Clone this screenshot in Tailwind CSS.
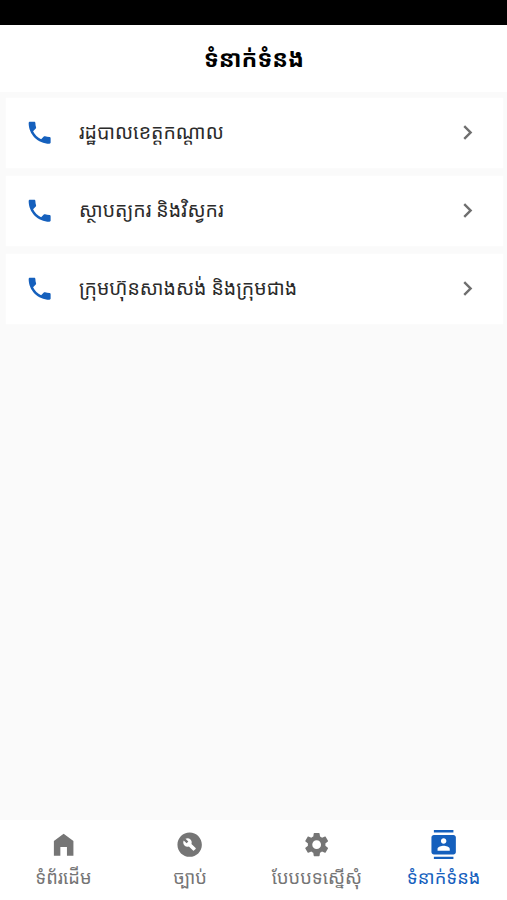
<!DOCTYPE html>
<html lang="km">
<head>
<meta charset="utf-8">
<title>ទំនាក់ទំនង</title>
<script src="https://cdn.jsdelivr.net/npm/@tailwindcss/browser@4"></script>
</head>
<body class="w-[507px] h-[900px] overflow-hidden flex flex-col bg-[#fafafa] font-['Noto_Sans_Khmer','Noto_Sans','DejaVu_Sans',sans-serif]">
<svg class="hidden">
<symbol id="call" viewBox="0 0 24 24"><path d="M6.62 10.79c1.44 2.83 3.76 5.14 6.59 6.59l2.2-2.2c.27-.27.67-.36 1.02-.24 1.12.37 2.33.57 3.57.57.55 0 1 .45 1 1V20c0 .55-.45 1-1 1-9.39 0-17-7.61-17-17 0-.55.45-1 1-1h3.5c.55 0 1 .45 1 1 0 1.25.2 2.45.57 3.57.11.35.03.74-.25 1.02l-2.2 2.2z"/></symbol>
<symbol id="chev" viewBox="0 0 24 24"><path d="M10 6 8.59 7.41 13.17 12l-4.58 4.59L10 18l6-6z"/></symbol>
</svg>
<div class="h-[25px] shrink-0 bg-black"></div>
<header class="h-[67px] shrink-0 bg-white flex items-center justify-center">
<h1 class="pb-[2px] pl-px text-[23.3px] leading-[30px] font-bold text-black whitespace-nowrap">ទំនាក់ទំនង</h1>
</header>
<main class="flex-1 pt-[6px] pl-[6px] pr-[4px] flex flex-col gap-[8px]">
<div class="h-[70px] bg-white flex items-center pl-[19px] pr-[21px] shadow-[0_0_2px_#ffffff]"><svg class="size-[29.3px] fill-[#1560bd]"><use href="#call"/></svg><span class="ml-[24.7px] pb-[2px] flex-1 text-[19.5px] leading-[30px] text-[#2b2b2b] whitespace-nowrap">រដ្ឋបាលខេត្តកណ្តាល</span><svg class="size-[29px] mb-px fill-[#6f6f6f]"><use href="#chev"/></svg></div>
<div class="h-[70px] bg-white flex items-center pl-[19px] pr-[21px] shadow-[0_0_2px_#ffffff]"><svg class="size-[29.3px] fill-[#1560bd]"><use href="#call"/></svg><span class="ml-[24.7px] pb-[2px] flex-1 text-[19.5px] leading-[30px] text-[#2b2b2b] whitespace-nowrap">ស្ថាបត្យករ និងវិស្វករ</span><svg class="size-[29px] mb-px fill-[#6f6f6f]"><use href="#chev"/></svg></div>
<div class="h-[70px] bg-white flex items-center pl-[19px] pr-[21px] shadow-[0_0_2px_#ffffff]"><svg class="size-[29.3px] fill-[#1560bd]"><use href="#call"/></svg><span class="ml-[24.7px] pb-[2px] flex-1 text-[19.5px] leading-[30px] text-[#2b2b2b] whitespace-nowrap">ក្រុមហ៊ុនសាងសង់ និងក្រុមជាង</span><svg class="size-[29px] mb-px fill-[#6f6f6f]"><use href="#chev"/></svg></div>
</main>
<nav class="h-[80px] shrink-0 bg-white grid grid-cols-4 pt-[10px] text-[18.3px] leading-[36px] text-[#757575] fill-[#757575]">
<div class="flex flex-col items-center"><svg class="size-[29.3px]" viewBox="0 0 24 24"><path d="M4 21V9l8-6 8 6v12h-5.3v-7H9.3v7z"/></svg><span class="whitespace-nowrap">ទំព័រដើម</span></div>
<div class="flex flex-col items-center"><svg class="size-[29.3px]" viewBox="0 0 24 24"><path d="M12 2C6.48 2 2 6.48 2 12s4.48 10 10 10 10-4.48 10-10S17.52 2 12 2zm4.9 13.49l-1.4 1.4c-.2.2-.51.2-.71 0l-3.41-3.41c-1.22.43-2.64.17-3.62-.81-1.11-1.11-1.3-2.79-.59-4.1l2.35 2.35 1.41-1.41-2.35-2.34c1.32-.71 2.99-.52 4.1.59.98.98 1.24 2.4.81 3.62l3.41 3.41c.19.19.19.51 0 .7z"/></svg><span class="whitespace-nowrap">ច្បាប់</span></div>
<div class="flex flex-col items-center"><svg class="size-[29.3px]" viewBox="0 0 24 24"><path d="M19.14 12.94c.04-.3.06-.61.06-.94 0-.32-.02-.64-.07-.94l2.03-1.58c.18-.14.23-.41.12-.61l-1.92-3.32c-.12-.22-.37-.29-.59-.22l-2.39.96c-.5-.38-1.03-.7-1.62-.94l-.36-2.54c-.04-.24-.24-.41-.48-.41h-3.84c-.24 0-.43.17-.47.41l-.36 2.54c-.59.24-1.13.57-1.62.94l-2.39-.96c-.22-.08-.47 0-.59.22L2.74 8.87c-.12.21-.08.47.12.61l2.03 1.58c-.05.3-.09.63-.09.94s.02.64.07.94l-2.03 1.58c-.18.14-.23.41-.12.61l1.92 3.32c.12.22.37.29.59.22l2.39-.96c.5.38 1.03.7 1.62.94l.36 2.54c.05.24.24.41.48.41h3.84c.24 0 .44-.17.47-.41l.36-2.54c.59-.24 1.13-.56 1.62-.94l2.39.96c.22.08.47 0 .59-.22l1.92-3.32c.12-.22.07-.47-.12-.61l-2.01-1.58zM12 15.6c-1.98 0-3.6-1.62-3.6-3.6s1.62-3.6 3.6-3.6 3.6 1.62 3.6 3.6-1.62 3.6-3.6 3.6z"/></svg><span class="whitespace-nowrap">បែបបទស្នើសុំ</span></div>
<div class="flex flex-col items-center text-[#1560bd] fill-[#1560bd]"><svg class="size-[29.3px]" viewBox="0 0 24 24"><path d="M20 0H4v2h16V0zM4 24h16v-2H4v2zM20 4H4c-1.1 0-2 .9-2 2v12c0 1.1.9 2 2 2h16c1.1 0 2-.9 2-2V6c0-1.1-.9-2-2-2zm-8 2.75c1.24 0 2.25 1.01 2.25 2.25s-1.01 2.25-2.25 2.25S9.75 10.24 9.75 9 10.76 6.75 12 6.75zM17 17H7v-1.5c0-1.67 3.33-2.5 5-2.5s5 .83 5 2.5V17z"/></svg><span class="whitespace-nowrap">ទំនាក់ទំនង</span></div>
</nav>
</body>
</html>
